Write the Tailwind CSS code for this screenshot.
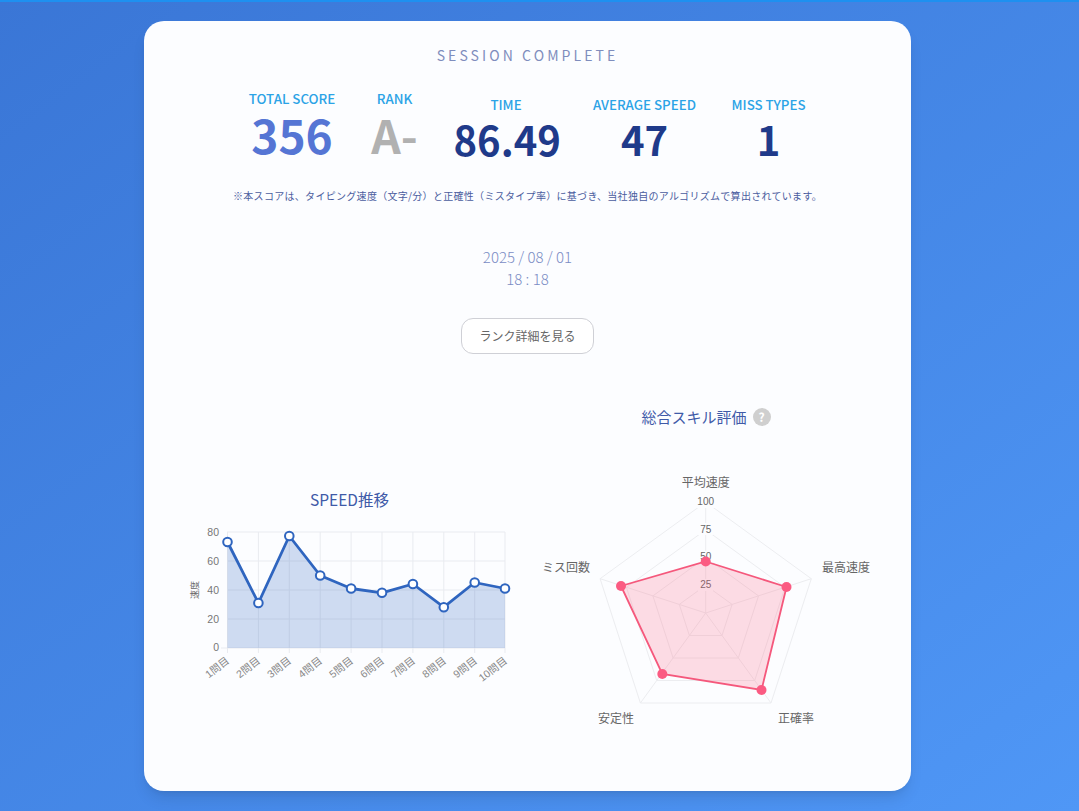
<!DOCTYPE html>
<html lang="ja">
<head>
    <meta charset="UTF-8">
    <title>SESSION COMPLETE</title>
    <script src="https://cdn.jsdelivr.net/npm/@tailwindcss/browser@4"></script>
</head>
<body class="h-[811px] overflow-hidden bg-gradient-to-br from-[#3a76d6] to-[#4f97f6] font-['Noto_Sans_CJK_JP','Noto_Sans',sans-serif]">
    <div class="h-[2px] bg-[#1e90f0]"></div>
    <div class="mt-[19px] h-[770px] w-[767px] ml-[144px] rounded-[20px] bg-[#fcfdff] shadow-lg flex flex-col items-center">
        <h1 class="mt-[24px] text-[14px] leading-[20px] tracking-[0.22em] text-[#7f8dbd]">SESSION COMPLETE</h1>

        <!-- stats -->
        <div class="mt-[26px] flex items-end gap-[34px]">
            <div class="text-center w-[87px]">
                <div class="text-[13.300px] leading-[16px] font-medium text-[#2ba3e6] whitespace-nowrap">TOTAL SCORE</div>
                <div class="text-[46px] leading-[54px] font-bold text-[#5575d4]">356</div>
            </div>
            <div class="text-center w-[50px]">
                <div class="text-[13.300px] leading-[16px] font-medium text-[#2ba3e6]">RANK</div>
                <div class="text-[46px] leading-[54px] font-bold text-[#b1b1b1]">A-</div>
            </div>
            <div class="text-center w-[105px]">
                <div class="text-[13.300px] leading-[16px] font-medium text-[#2ba3e6]">TIME</div>
                <div class="mt-[4px] text-[40px] leading-[44px] font-bold text-[#1f3a8a]">86.49</div>
            </div>
            <div class="text-center w-[104px]">
                <div class="text-[13.300px] leading-[16px] font-medium text-[#2ba3e6] whitespace-nowrap">AVERAGE SPEED</div>
                <div class="mt-[4px] text-[40px] leading-[44px] font-bold text-[#1f3a8a]">47</div>
            </div>
            <div class="text-center w-[76px]">
                <div class="text-[13.300px] leading-[16px] font-medium text-[#2ba3e6] whitespace-nowrap">MISS TYPES</div>
                <div class="mt-[4px] text-[40px] leading-[44px] font-bold text-[#1f3a8a]">1</div>
            </div>
        </div>

        <p class="mt-[28px] text-[10px] leading-[14px] tracking-[0.03em] text-[#4a5c9e] whitespace-nowrap">※本スコアは、タイピング速度（文字/分）と正確性（ミスタイプ率）に基づき、当社独自のアルゴリズムで算出されています。</p>

        <div class="mt-[43px] text-center text-[15px] leading-[22px] font-light text-[#7a8cc4]">
            <div>2025 / 08 / 01</div>
            <div>18 : 18</div>
        </div>

        <button class="mt-[28px] h-[36px] w-[133px] rounded-[12px] border border-[#cfd0d6] bg-white text-[12px] text-[#666]">ランク詳細を見る</button>

        <!-- charts -->
        <div class="mt-[52px] w-full flex items-start">
            <div class="w-[382px] pl-[36px] pt-[82px]">
                <h2 class="w-[339px] text-center text-[15.500px] leading-[22px] text-[#3f5aa8]">SPEED推移</h2>
                <svg class="mt-[10px] block font-['Liberation_Sans','Noto_Sans_CJK_JP',sans-serif]" width="340" height="170" viewBox="180 520 340 170">
                    <g stroke="#e9ebf0" stroke-width="1">
                        <path d="M227 532H505M227 561H505M227 590H505M227 619H505M221 648H505"/>
                        <path d="M227.5 532V653M258.4 532V653M289.3 532V653M320.2 532V653M351.1 532V653M382 532V653M412.9 532V653M443.8 532V653M474.7 532V653M505 532V653"/>
                    </g>
                    <path fill="#2f62bd" fill-opacity="0.22" d="M227.5 542L258.4 603L289.3 536L320.2 575.500L351.100 588.500L382 592.800L412.900 584L443.800 607.200L474.700 582.500L505 588.500V648H227.500Z"/>
                    <path fill="none" stroke="#2f65bf" stroke-width="2.800" stroke-linejoin="round" d="M227.500 542L258.400 603L289.300 536L320.200 575.500L351.100 588.500L382 592.800L412.900 584L443.800 607.200L474.700 582.500L505 588.500"/>
                    <g fill="#fff" stroke="#2f65bf" stroke-width="2">
                        <circle cx="227.500" cy="542" r="4.300"/><circle cx="258.400" cy="603" r="4.300"/><circle cx="289.300" cy="536" r="4.300"/><circle cx="320.200" cy="575.500" r="4.300"/><circle cx="351.100" cy="588.500" r="4.300"/><circle cx="382" cy="592.800" r="4.300"/><circle cx="412.900" cy="584" r="4.300"/><circle cx="443.800" cy="607.200" r="4.300"/><circle cx="474.700" cy="582.500" r="4.300"/><circle cx="505" cy="588.500" r="4.300"/>
                    </g>
                    <g fill="#777" font-size="10.500" text-anchor="end">
                        <text x="219" y="536">80</text><text x="219" y="565">60</text><text x="219" y="594">40</text><text x="219" y="623">20</text><text x="219" y="651">0</text>
                    </g>
                    <text transform="translate(198 590) rotate(-90)" text-anchor="middle" fill="#666" font-size="9">速度</text>
                    <g fill="#888" font-size="10.500" text-anchor="end">
                        <text transform="translate(230 662) rotate(-38)">1問目</text>
                        <text transform="translate(261 662) rotate(-38)">2問目</text>
                        <text transform="translate(292 662) rotate(-38)">3問目</text>
                        <text transform="translate(323 662) rotate(-38)">4問目</text>
                        <text transform="translate(354 662) rotate(-38)">5問目</text>
                        <text transform="translate(385 662) rotate(-38)">6問目</text>
                        <text transform="translate(416 662) rotate(-38)">7問目</text>
                        <text transform="translate(447 662) rotate(-38)">8問目</text>
                        <text transform="translate(478 662) rotate(-38)">9問目</text>
                        <text transform="translate(508 662) rotate(-38)">10問目</text>
                    </g>
                </svg>
            </div>
            <div class="flex-1">
                <div class="w-[340px] ml-[10px] flex items-center justify-center gap-[6px]">
                    <h2 class="text-[15px] leading-[22px] text-[#3f5aa8]">総合スキル評価</h2>
                    <span class="flex h-[18px] w-[18px] items-center justify-center rounded-full bg-[#cfcfcf] text-[12px] font-bold text-white">?</span>
                </div>
                <svg class="ml-[4px] mt-[37px] block font-['Liberation_Sans','Noto_Sans_CJK_JP',sans-serif]" width="350" height="270" viewBox="530 465 350 270">
                    <g fill="none" stroke="#ecedf0" stroke-width="1">
                        <path d="M705.700 502L811.300 578.700L771 703L640.400 703L600.100 578.700Z"/>
                        <path d="M705.700 529.800L785 587.300L754.700 680.500L656.700 680.500L626.400 587.300Z"/>
                        <path d="M705.700 557.500L758.500 595.900L738.300 658L673.100 658L652.900 595.900Z"/>
                        <path d="M705.700 585.300L732.100 604.400L722 635.500L689.400 635.500L679.300 604.400Z"/>
                        <path d="M705.700 613V502M705.700 613L811.300 578.700M705.700 613L771 703M705.700 613L640.400 703M705.700 613L600.100 578.700"/>
                    </g>
                    <g fill="#fcfdff">
                        <rect x="695" y="496" width="21" height="12"/><rect x="698" y="523" width="15" height="12"/><rect x="698" y="551" width="15" height="12"/><rect x="698" y="579" width="15" height="12"/>
                    </g>
                    <g fill="#666" font-size="10" text-anchor="middle">
                        <text x="705.700" y="505">100</text><text x="705.700" y="533">75</text><text x="705.700" y="560">50</text><text x="705.700" y="588">25</text>
                    </g>
                    <path fill="#ff6384" fill-opacity="0.22" stroke="#f5587c" stroke-width="1.800" d="M705.700 561.500L786.500 587L761.500 690L662.300 674L621 586Z"/>
                    <g fill="#fb5b82">
                        <circle cx="705.700" cy="561.500" r="5"/><circle cx="786.500" cy="587" r="5"/><circle cx="761.500" cy="690" r="5"/><circle cx="662.300" cy="674" r="5"/><circle cx="621" cy="586" r="5"/>
                    </g>
                    <g fill="#666" font-size="12" text-anchor="middle">
                        <text x="705.700" y="487">平均速度</text>
                        <text x="846" y="572">最高速度</text>
                        <text x="796" y="723">正確率</text>
                        <text x="616" y="723">安定性</text>
                        <text x="566" y="572">ミス回数</text>
                    </g>
                </svg>
            </div>
        </div>
    </div>
</body>
</html>
